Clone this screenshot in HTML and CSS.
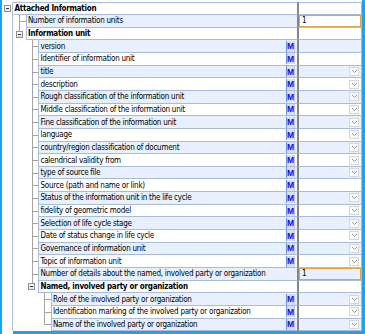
FILE: index.html
```html
<!doctype html>
<html lang="en">
<head>
	<meta charset="UTF-8">
	<title>Attached Information</title>
	<link rel="stylesheet" href="styles.css">
</head>
<body>
	<div class="frame">
		<div class="tree">
			<div class="row">
				<span class="slot"><i class="toggle"></i></span>
				<div class="name bold">Attached Information</div>
				<div class="value"></div>
			</div>
			<div class="row">
				<span class="slot"></span><span class="slot tee"></span>
				<div class="name">Number of information units</div>
				<div class="value edit"><span class="editor focus">1</span></div>
			</div>
			<div class="row">
				<span class="slot"></span><span class="slot top"><i class="toggle"></i></span>
				<div class="name bold">Information unit</div>
				<div class="value"></div>
			</div>
			<div class="row">
				<span class="slot"></span><span class="slot"></span><span class="slot tee"></span>
				<div class="name">version<i class="m">M</i></div>
				<div class="value"></div>
			</div>
			<div class="row">
				<span class="slot"></span><span class="slot"></span><span class="slot tee"></span>
				<div class="name">Identifier of information unit<i class="m">M</i></div>
				<div class="value"></div>
			</div>
			<div class="row">
				<span class="slot"></span><span class="slot"></span><span class="slot tee"></span>
				<div class="name">title<i class="m">M</i></div>
				<div class="value"><span class="combo"><svg width="7" height="5" viewBox="0 0 7 5"><polyline points="1,1 3.5,3.5 6,1"/></svg></span></div>
			</div>
			<div class="row">
				<span class="slot"></span><span class="slot"></span><span class="slot tee"></span>
				<div class="name">description<i class="m">M</i></div>
				<div class="value"><span class="combo"><svg width="7" height="5" viewBox="0 0 7 5"><polyline points="1,1 3.5,3.5 6,1"/></svg></span></div>
			</div>
			<div class="row">
				<span class="slot"></span><span class="slot"></span><span class="slot tee"></span>
				<div class="name">Rough classification of the information unit<i class="m">M</i></div>
				<div class="value"><span class="combo"><svg width="7" height="5" viewBox="0 0 7 5"><polyline points="1,1 3.5,3.5 6,1"/></svg></span></div>
			</div>
			<div class="row">
				<span class="slot"></span><span class="slot"></span><span class="slot tee"></span>
				<div class="name">Middle classification of the information unit<i class="m">M</i></div>
				<div class="value"><span class="combo"><svg width="7" height="5" viewBox="0 0 7 5"><polyline points="1,1 3.5,3.5 6,1"/></svg></span></div>
			</div>
			<div class="row">
				<span class="slot"></span><span class="slot"></span><span class="slot tee"></span>
				<div class="name">Fine classification of the information unit<i class="m">M</i></div>
				<div class="value"><span class="combo"><svg width="7" height="5" viewBox="0 0 7 5"><polyline points="1,1 3.5,3.5 6,1"/></svg></span></div>
			</div>
			<div class="row">
				<span class="slot"></span><span class="slot"></span><span class="slot tee"></span>
				<div class="name">language<i class="m">M</i></div>
				<div class="value"><span class="combo"><svg width="7" height="5" viewBox="0 0 7 5"><polyline points="1,1 3.5,3.5 6,1"/></svg></span></div>
			</div>
			<div class="row">
				<span class="slot"></span><span class="slot"></span><span class="slot tee"></span>
				<div class="name">country/region classification of document<i class="m">M</i></div>
				<div class="value"><span class="combo"><svg width="7" height="5" viewBox="0 0 7 5"><polyline points="1,1 3.5,3.5 6,1"/></svg></span></div>
			</div>
			<div class="row">
				<span class="slot"></span><span class="slot"></span><span class="slot tee"></span>
				<div class="name">calendrical validity from<i class="m">M</i></div>
				<div class="value"><span class="combo"><svg width="7" height="5" viewBox="0 0 7 5"><polyline points="1,1 3.5,3.5 6,1"/></svg></span></div>
			</div>
			<div class="row">
				<span class="slot"></span><span class="slot"></span><span class="slot tee"></span>
				<div class="name">type of source file<i class="m">M</i></div>
				<div class="value"><span class="combo"><svg width="7" height="5" viewBox="0 0 7 5"><polyline points="1,1 3.5,3.5 6,1"/></svg></span></div>
			</div>
			<div class="row">
				<span class="slot"></span><span class="slot"></span><span class="slot tee"></span>
				<div class="name">Source (path and name or link)<i class="m">M</i></div>
				<div class="value"></div>
			</div>
			<div class="row">
				<span class="slot"></span><span class="slot"></span><span class="slot tee"></span>
				<div class="name">Status of the information unit in the life cycle<i class="m">M</i></div>
				<div class="value"><span class="combo"><svg width="7" height="5" viewBox="0 0 7 5"><polyline points="1,1 3.5,3.5 6,1"/></svg></span></div>
			</div>
			<div class="row">
				<span class="slot"></span><span class="slot"></span><span class="slot tee"></span>
				<div class="name">fidelity of geometric model<i class="m">M</i></div>
				<div class="value"><span class="combo"><svg width="7" height="5" viewBox="0 0 7 5"><polyline points="1,1 3.5,3.5 6,1"/></svg></span></div>
			</div>
			<div class="row">
				<span class="slot"></span><span class="slot"></span><span class="slot tee"></span>
				<div class="name">Selection of life cycle stage<i class="m">M</i></div>
				<div class="value"><span class="combo"><svg width="7" height="5" viewBox="0 0 7 5"><polyline points="1,1 3.5,3.5 6,1"/></svg></span></div>
			</div>
			<div class="row">
				<span class="slot"></span><span class="slot"></span><span class="slot tee"></span>
				<div class="name">Date of status change in life cycle<i class="m">M</i></div>
				<div class="value"><span class="combo"><svg width="7" height="5" viewBox="0 0 7 5"><polyline points="1,1 3.5,3.5 6,1"/></svg></span></div>
			</div>
			<div class="row">
				<span class="slot"></span><span class="slot"></span><span class="slot tee"></span>
				<div class="name">Governance of information unit<i class="m">M</i></div>
				<div class="value"><span class="combo"><svg width="7" height="5" viewBox="0 0 7 5"><polyline points="1,1 3.5,3.5 6,1"/></svg></span></div>
			</div>
			<div class="row">
				<span class="slot"></span><span class="slot"></span><span class="slot tee"></span>
				<div class="name">Topic of information unit<i class="m">M</i></div>
				<div class="value"><span class="combo"><svg width="7" height="5" viewBox="0 0 7 5"><polyline points="1,1 3.5,3.5 6,1"/></svg></span></div>
			</div>
			<div class="row">
				<span class="slot"></span><span class="slot"></span><span class="slot tee"></span>
				<div class="name">Number of details about the named, involved party or organization</div>
				<div class="value edit"><span class="editor">1</span></div>
			</div>
			<div class="row">
				<span class="slot"></span><span class="slot"></span><span class="slot top"><i class="toggle"></i></span>
				<div class="name bold">Named, involved party or organization</div>
				<div class="value"></div>
			</div>
			<div class="row">
				<span class="slot"></span><span class="slot"></span><span class="slot"></span><span class="slot tee"></span>
				<div class="name">Role of the involved party or organization<i class="m">M</i></div>
				<div class="value"><span class="combo"><svg width="7" height="5" viewBox="0 0 7 5"><polyline points="1,1 3.5,3.5 6,1"/></svg></span></div>
			</div>
			<div class="row">
				<span class="slot"></span><span class="slot"></span><span class="slot"></span><span class="slot tee"></span>
				<div class="name">Identification marking of the involved party or organization<i class="m">M</i></div>
				<div class="value"><span class="combo"><svg width="7" height="5" viewBox="0 0 7 5"><polyline points="1,1 3.5,3.5 6,1"/></svg></span></div>
			</div>
			<div class="row">
				<span class="slot"></span><span class="slot"></span><span class="slot"></span><span class="slot elbow"></span>
				<div class="name">Name of the involved party or organization<i class="m">M</i></div>
				<div class="value"><span class="combo"><svg width="7" height="5" viewBox="0 0 7 5"><polyline points="1,1 3.5,3.5 6,1"/></svg></span></div>
			</div>
		</div>
		<div class="edge"></div>
	</div>
</body>
</html>
```

FILE: styles.css
```css
*,*::before,*::after{box-sizing:border-box;}
html,body{margin:0;padding:0;}
body{
	width:365px;
	height:334px;
	overflow:hidden;
	background:#fff;
	font-family:"DejaVu Sans Condensed","DejaVu Sans",sans-serif;
	font-size:8px;
	letter-spacing:-0.26px;
	color:#000;
}

.frame{
	height:334px;
	border-left:2px solid #1aa3f0;
	border-right:3px solid #1aa3f0;
	display:flex;
	flex-direction:column;
}
.tree{
	flex:1;
	padding-top:1.5px;
}
.edge{
	height:3px;
	margin-left:11px;
	background:#1aa3f0;
}

/* rows */
.row{
	display:flex;
	height:12.65px;
}
.row:first-child{height:13.65px;}
.row:first-child .name,.row:first-child .value{border-top:1px solid #a9bbdd;}
.row:first-child .name{border-left:0;}
.row:nth-child(even) .name,.row:nth-child(even) .value{background:#e7f0fc;}

/* tree indent slots */
.slot{
	flex:none;
	width:12.5px;
	display:flex;
	align-items:center;
	justify-content:center;
}
.slot:first-child{
	width:11px;
	border-right:1px solid #b3c1dc;
}
.tee{
	background:
		linear-gradient(#a3a3a3,#a3a3a3) 6px 0/1px 100% no-repeat,
		linear-gradient(#a3a3a3,#a3a3a3) 6px 50%/7px 1px no-repeat;
}
.elbow{
	background:
		linear-gradient(#a3a3a3,#a3a3a3) 6px 0/1px 50% no-repeat,
		linear-gradient(#a3a3a3,#a3a3a3) 6px 50%/7px 1px no-repeat;
}
.top{
	background:linear-gradient(#a3a3a3,#a3a3a3) 6px 0/1px 50% no-repeat;
}
.toggle{
	width:7px;
	height:7px;
	border:1px solid #919191;
	background:linear-gradient(#fff,#e2e2e2);
	display:flex;
	align-items:center;
	justify-content:center;
}
.toggle::before{
	content:"";
	width:3px;
	height:1px;
	background:#333;
}

/* cells */
.name{
	flex:1;
	min-width:0;
	display:flex;
	align-items:center;
	justify-content:space-between;
	padding:0 2px 0 1.5px;
	border-left:1px solid #a9bbdd;
	border-bottom:1px solid #a9bbdd;
	white-space:nowrap;
}
.bold{font-weight:bold;}
.value{
	flex:none;
	width:65px;
	display:flex;
	align-items:center;
	justify-content:flex-end;
	padding-right:2px;
	border-left:2px solid #858585;
	border-right:1px solid #a9bbdd;
	border-bottom:1px solid #a9bbdd;
}
.value.edit{padding:0;}

.m{
	width:9px;
	height:11px;
	display:flex;
	align-items:center;
	justify-content:center;
	font-family:"Liberation Sans",Arial,sans-serif;
	font-style:normal;
	font-weight:bold;
	font-size:8.5px;
	letter-spacing:0;
	color:#0b0bea;
	background:#d6dffd;
	border-left:1.5px solid #6f8ff2;
	border-right:1px solid #b9c9f7;
}
.combo{
	width:10px;
	height:9px;
	border:1px solid #d6d6d6;
	background:#fbfbfb;
	display:flex;
	align-items:center;
	justify-content:center;
}
.combo polyline{
	fill:none;
	stroke:#9a9a9a;
	stroke-width:1;
}
.editor{
	flex:1;
	align-self:stretch;
	display:flex;
	align-items:center;
	padding-left:2px;
	border:1px solid #e2a444;
}
.editor.focus{background:#fff;}
```
